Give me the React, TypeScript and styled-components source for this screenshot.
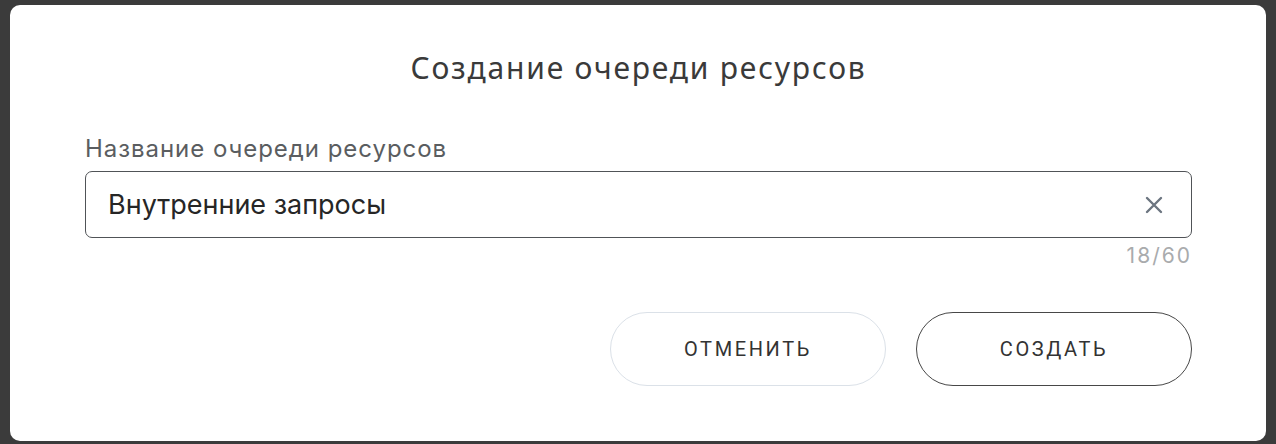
import React, { useState } from "react";
import styled, { createGlobalStyle } from "styled-components";

const Global = createGlobalStyle`
  html, body { margin: 0; padding: 0; background: #3b3b3b; }
  * { box-sizing: border-box; }
`;

const Page = styled.div`
  height: 444px;
  padding: 5px 10px 3px 10px;
  background: #3b3b3b;
  display: flex;
`;

const Modal = styled.div`
  flex: 1;
  background: #ffffff;
  border-radius: 10px;
  padding: 45px 74px 0 75px;
  display: flex;
  flex-direction: column;
`;

const Title = styled.h2`
  margin: 0;
  text-align: center;
  font-family: "Noto Sans", sans-serif;
  font-weight: 400;
  font-size: 30px;
  line-height: 36px;
  color: #3a3a3a;
  letter-spacing: 1.8px;
`;

const Field = styled.div`
  margin-top: 49px;
  display: flex;
  flex-direction: column;
`;

const Label = styled.label`
  font-family: "Inter", "Roboto", sans-serif;
  font-size: 24px;
  line-height: 28px;
  letter-spacing: 0.95px;
  color: #5a5d60;
`;

const InputBox = styled.div`
  margin-top: 8px;
  height: 67px;
  border: 1px solid #505357;
  border-radius: 7px;
  display: flex;
  align-items: center;
  padding: 0 27px 0 22px;
`;

const Input = styled.input`
  flex: 1;
  border: none;
  outline: none;
  background: transparent;
  font-family: "Inter", "Roboto", sans-serif;
  font-size: 27px;
  color: #262626;
  padding: 0;
`;

const ClearButton = styled.button`
  border: none;
  background: transparent;
  padding: 0;
  width: 20px;
  height: 20px;
  display: flex;
  align-items: center;
  justify-content: center;
  cursor: pointer;
`;

const Counter = styled.div`
  margin-top: 6px;
  text-align: right;
  font-family: "Inter", "Roboto", sans-serif;
  font-size: 21px;
  line-height: 24px;
  letter-spacing: 2px;
  color: #a9abad;
`;

const Actions = styled.div`
  margin-top: 44px;
  display: flex;
  justify-content: flex-end;
  gap: 30px;
`;

const Button = styled.button<{ $primary?: boolean }>`
  width: 276px;
  height: 74px;
  border-radius: 37px;
  background: #ffffff;
  border: ${(p) => (p.$primary ? "1.5px solid #474747" : "1px solid #dbe1e8")};
  font-family: "Roboto", sans-serif;
  font-weight: 400;
  font-size: 20px;
  letter-spacing: 2.6px;
  color: #333333;
  text-transform: uppercase;
  cursor: pointer;
`;

export default function App() {
  const [value, setValue] = useState("Внутренние запросы");
  return (
    <>
      <Global />
      <Page>
        <Modal>
          <Title>Создание очереди ресурсов</Title>
          <Field>
            <Label>Название очереди ресурсов</Label>
            <InputBox>
              <Input value={value} onChange={(e) => setValue(e.target.value)} maxLength={60} />
              <ClearButton onClick={() => setValue("")} aria-label="clear">
                <svg width="18" height="18" viewBox="0 0 18 18">
                  <path d="M2 2 L16 16 M16 2 L2 16" stroke="#6c7580" strokeWidth="2.4" strokeLinecap="round" />
                </svg>
              </ClearButton>
            </InputBox>
            <Counter>{value.length}/60</Counter>
          </Field>
          <Actions>
            <Button>Отменить</Button>
            <Button $primary>Создать</Button>
          </Actions>
        </Modal>
      </Page>
    </>
  );
}
